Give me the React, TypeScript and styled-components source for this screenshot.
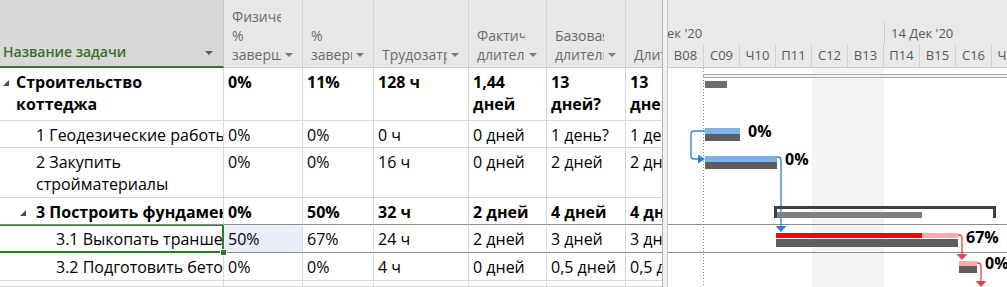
import styled, { createGlobalStyle } from 'styled-components';

const GlobalStyle = createGlobalStyle`
  html, body {
    margin: 0;
    padding: 0;
    background: #fff;
  }
  body {
    font-family: 'Open Sans', 'Noto Sans', sans-serif;
    overflow: hidden;
  }
  * {
    box-sizing: border-box;
  }
`;

type Row = {
  h: number;
  name: string[];
  lead: number;
  toggle?: number;
  bold?: boolean;
  selected?: boolean;
  dark?: boolean;
  cells: string[][];
};

const rows: Row[] = [
  {
    h: 53,
    name: ['Строительство', 'коттеджа'],
    lead: 3,
    toggle: 13,
    bold: true,
    cells: [['0%'], ['11%'], ['128 ч'], ['1,44', 'дней'], ['13', 'дней?'], ['13', 'дней']],
  },
  {
    h: 27,
    name: ['1 Геодезические работы'],
    lead: 36,
    cells: [['0%'], ['0%'], ['0 ч'], ['0 дней'], ['1 день?'], ['1 день?']],
  },
  {
    h: 50,
    name: ['2 Закупить', 'стройматериалы'],
    lead: 36,
    cells: [['0%'], ['0%'], ['16 ч'], ['0 дней'], ['2 дней'], ['2 дней']],
  },
  {
    h: 27,
    name: ['3 Построить фундамент'],
    lead: 20,
    toggle: 16,
    bold: true,
    dark: true,
    cells: [['0%'], ['50%'], ['32 ч'], ['2 дней'], ['4 дней'], ['4 дней']],
  },
  {
    h: 28,
    name: ['3.1 Выкопать траншею'],
    lead: 56,
    selected: true,
    dark: true,
    cells: [['50%'], ['67%'], ['24 ч'], ['2 дней'], ['3 дней'], ['3 дней']],
  },
  {
    h: 28,
    name: ['3.2 Подготовить бетон'],
    lead: 56,
    cells: [['0%'], ['0%'], ['4 ч'], ['0 дней'], ['0,5 дней'], ['0,5 дней']],
  },
];

const headers: string[][] = [
  ['Физический', '%', 'завершения'],
  ['%', 'завершения'],
  ['Трудозатраты'],
  ['Фактическая', 'длительность'],
  ['Базовая', 'длительность'],
  ['Длительность'],
];

const days = ['В08', 'С09', 'Ч10', 'П11', 'С12', 'В13', 'П14', 'В15', 'С16', 'Ч17'];

const GREEN = '#2f7a2c';

const App = () => {
  return (
    <>
      <GlobalStyle />
      <Screen>
        <Sheet>
          <NameHead>
            <span>Название задачи</span>
            <Arrow $green />
          </NameHead>
          {headers.map((lines, i) => (
            <HeadCell key={i} $last={i === headers.length - 1}>
              {lines.map((l, j) => (
                <HeadLine key={j}>
                  <HeadText>{l}</HeadText>
                  {i < headers.length - 1 && <Arrow $hidden={j !== lines.length - 1} />}
                </HeadLine>
              ))}
            </HeadCell>
          ))}

          {rows.map((r, i) => (
            <>
              <NameCell key={'n' + i} $lead={r.lead} $bold={r.bold} $dark={r.dark} $selected={r.selected}>
                {r.toggle && (
                  <ToggleBox $w={r.toggle}>
                    <Toggle />
                  </ToggleBox>
                )}
                <NameText>
                  {r.name.map((l, j) => (
                    <Line key={j}>{l}</Line>
                  ))}
                </NameText>
                {r.selected && <Handle />}
              </NameCell>
              {r.cells.map((c, j) => (
                <Cell
                  key={'c' + i + '-' + j}
                  $bold={r.bold}
                  $dark={r.dark}
                  $tint={r.selected && j === 0}
                  $last={j === r.cells.length - 1}
                >
                  {c.map((l, k) => (
                    <Line key={k}>{l}</Line>
                  ))}
                </Cell>
              ))}
            </>
          ))}
          <NameCell $lead={0} />
          {headers.map((_, j) => (
            <Cell key={'e' + j} $last={j === headers.length - 1} />
          ))}
        </Sheet>

        <Splitter />

        <Timeline>
          <ChartHead>
            <TopTier>
              <WeekCell $w={216} $first>
                ек '20
              </WeekCell>
              <WeekCell $w={252}>14 Дек '20</WeekCell>
            </TopTier>
            <BottomTier>
              {days.map((d) => (
                <DayCell key={d}>{d}</DayCell>
              ))}
            </BottomTier>
          </ChartHead>

          <ChartBody>
            {rows.map((r, i) => (
              <ChartRow key={i} $h={r.h} $dark={r.dark} />
            ))}
            <Gantt viewBox="0 0 339 219" width="339" height="219">
              <line x1="35.5" y1="0" x2="35.5" y2="219" stroke="#8a8a8a" strokeDasharray="1 2" />

              <rect x="35.5" y="6.5" width="320" height="3" fill="#f2f2f2" stroke="#a8a8a8" />
              <rect x="37" y="13" width="22" height="7" fill="#6d6d6d" />

              <rect x="37" y="60" width="35" height="6" fill="#7db1e8" />
              <rect x="37" y="66" width="35" height="7" fill="#5e5e5e" />
              <BarLabel x="80" y="69">0%</BarLabel>

              <rect x="37" y="88" width="72" height="6" fill="#7db1e8" />
              <rect x="37" y="94" width="72" height="7" fill="#5e5e5e" />
              <BarLabel x="117" y="97">0%</BarLabel>

              <path d="M37 63 H26 Q23 63 23 66 V88 Q23 91 26 91 H31" stroke="#2f7fd8" strokeWidth="1.3" fill="none" />
              <polygon points="30,86.5 37,91 30,95.5" fill="#2f7fd8" />
              <path d="M109 89 H110 Q113 89 113 92 V158" stroke="#2f7fd8" strokeWidth="1.3" fill="none" />
              <polygon points="107.5,158 118.5,158 113,164" fill="#2f7fd8" />

              <rect x="106" y="138" width="222" height="3" fill="#404040" />
              <rect x="106" y="138" width="3" height="12" fill="#404040" />
              <rect x="325" y="138" width="3" height="12" fill="#404040" />
              <rect x="109" y="144" width="145" height="6" fill="#7f7f7f" />

              <rect x="108" y="165" width="146" height="5" fill="#ff0000" />
              <rect x="254" y="165" width="36" height="5" fill="#ffabab" />
              <rect x="108" y="171" width="182" height="8" fill="#5e5e5e" />
              <BarLabel x="298" y="175">67%</BarLabel>
              <path d="M290 167 H291 Q294 167 294 170 V187" stroke="#e04848" strokeWidth="1.3" fill="none" />
              <polygon points="288.5,186 299.5,186 294,192" fill="#e04848" />

              <rect x="291" y="193" width="18" height="5" fill="#ffabab" />
              <rect x="291" y="198" width="18" height="7" fill="#5e5e5e" />
              <BarLabel x="317" y="201">0%</BarLabel>
              <path d="M309 195 H310 Q313 195 313 198 V213" stroke="#e04848" strokeWidth="1.3" fill="none" />
              <polygon points="307.5,213 318.5,213 313,219" fill="#e04848" />
            </Gantt>
          </ChartBody>
        </Timeline>
      </Screen>
    </>
  );
};

export default App;

const Screen = styled.div`
  display: flex;
  width: 1007px;
  height: 287px;
  overflow: hidden;
  background: #fff;
`;

const Sheet = styled.div`
  display: grid;
  grid-template-columns: 224px 79px 71px 95px 78px 79px 36px;
  grid-template-rows: 68px 53px 27px 50px 27px 28px 28px 1fr;
  width: 662px;
  height: 287px;
  flex: none;
`;

const NameHead = styled.div`
  display: flex;
  align-items: flex-end;
  justify-content: space-between;
  padding: 0 10px 5px 3px;
  background: #d8d8d8;
  border-right: 1px solid #c8c8c8;
  border-bottom: 2px solid ${GREEN};
  color: #3a6f26;
  font-size: 14px;
  font-weight: 600;
  line-height: 19px;

  span {
    white-space: nowrap;
  }
`;

const HeadCell = styled.div<{ $last?: boolean }>`
  display: flex;
  flex-direction: column;
  justify-content: flex-end;
  padding: 0 ${(p) => (p.$last ? '0' : '9px')} 3px 8px;
  background: #e7e7e7;
  border-right: ${(p) => (p.$last ? 'none' : '1px solid #d3d3d3')};
  border-bottom: 1px solid #c9c9c9;
  color: #6c6c6c;
  font-size: 14px;
  line-height: 19px;
  overflow: hidden;
`;

const HeadLine = styled.div`
  display: flex;
  align-items: center;
  white-space: nowrap;
`;

const HeadText = styled.span`
  flex: 1 1 auto;
  min-width: 0;
  overflow: hidden;
`;

const Arrow = styled.span<{ $green?: boolean; $hidden?: boolean }>`
  flex: none;
  width: 0;
  height: 0;
  margin-left: 4px;
  margin-bottom: ${(p) => (p.$green ? '6px' : '0')};
  border-left: 4px solid transparent;
  border-right: 4px solid transparent;
  border-top: 4px solid ${(p) => (p.$green ? GREEN : '#7a7a7a')};
  visibility: ${(p) => (p.$hidden ? 'hidden' : 'visible')};
`;

const NameCell = styled.div<{ $lead: number; $bold?: boolean; $dark?: boolean; $selected?: boolean }>`
  position: relative;
  z-index: ${(p) => (p.$selected ? 1 : 0)};
  display: flex;
  align-items: flex-start;
  padding: 3px 0 0 ${(p) => p.$lead}px;
  border-right: ${(p) => (p.$selected ? `2px solid ${GREEN}` : '1px solid #d8d8d8')};
  border-bottom: ${(p) => (p.$selected ? `2px solid ${GREEN}` : p.$dark ? '1px solid #8c8c8c' : '1px solid #d8d8d8')};
  box-shadow: ${(p) => (p.$selected ? `inset 0 1px 0 ${GREEN}` : 'none')};
  font-size: 16px;
  font-weight: ${(p) => (p.$bold ? 700 : 400)};
  line-height: 22px;
  color: #000;
  min-width: 0;
`;

const NameText = styled.div`
  flex: 1 1 auto;
  min-width: 0;
  overflow: hidden;
  white-space: nowrap;
`;

const ToggleBox = styled.div<{ $w: number }>`
  flex: none;
  width: ${(p) => p.$w}px;
  padding-top: 9px;
`;

const Toggle = styled.div`
  width: 0;
  height: 0;
  border-style: solid;
  border-width: 0 0 6px 6px;
  border-color: transparent transparent #4d4d4d transparent;
`;

const Handle = styled.div`
  position: absolute;
  right: -5px;
  bottom: -5px;
  width: 7px;
  height: 7px;
  background: ${GREEN};
  border: 1px solid #fff;
`;

const Line = styled.div`
  white-space: nowrap;
`;

const Cell = styled.div<{ $bold?: boolean; $dark?: boolean; $tint?: boolean; $last?: boolean }>`
  padding: 3px 0 0 4px;
  background: ${(p) => (p.$tint ? '#e8eefb' : 'transparent')};
  border-right: ${(p) => (p.$last ? 'none' : '1px solid #d8d8d8')};
  border-bottom: ${(p) => (p.$dark ? '1px solid #8c8c8c' : '1px solid #d8d8d8')};
  font-size: 16px;
  font-weight: ${(p) => (p.$bold ? 700 : 400)};
  line-height: 22px;
  color: #000;
  overflow: hidden;
  min-width: 0;
`;

const Splitter = styled.div`
  flex: none;
  width: 6px;
  height: 287px;
  background: #f1f1f1;
  border-left: 1px solid #b4b4b4;
  border-right: 1px solid #c4c4c4;
`;

const Timeline = styled.div`
  flex: 1;
  display: flex;
  flex-direction: column;
  min-width: 0;
  overflow: hidden;
`;

const ChartHead = styled.div`
  flex: none;
  height: 68px;
  padding-top: 22px;
  background: #e9e9e9;
  border-bottom: 1px solid #c9c9c9;
  color: #5a5a5a;
  font-size: 13px;
  overflow: hidden;
`;

const TopTier = styled.div`
  display: flex;
  height: 22px;
  line-height: 22px;
`;

const WeekCell = styled.div<{ $w: number; $first?: boolean }>`
  flex: none;
  width: ${(p) => p.$w}px;
  padding-left: ${(p) => (p.$first ? '0' : '6px')};
  text-indent: ${(p) => (p.$first ? '-1px' : '0')};
  border-left: ${(p) => (p.$first ? 'none' : '1px solid #cdcdcd')};
  white-space: nowrap;
  overflow: hidden;
`;

const BottomTier = styled.div`
  display: flex;
  height: 23px;
  line-height: 22px;
`;

const DayCell = styled.div`
  flex: none;
  width: 36px;
  text-align: center;
  border-right: 1px solid #d0d0d0;
  white-space: nowrap;
`;

const ChartBody = styled.div`
  position: relative;
  flex: 1;
  background: linear-gradient(
    to right,
    transparent 144px,
    #f4f4f4 144px,
    #f4f4f4 216px,
    transparent 216px
  );
`;

const ChartRow = styled.div<{ $h: number; $dark?: boolean }>`
  height: ${(p) => p.$h}px;
  border-bottom: ${(p) => (p.$dark ? '1px solid #8c8c8c' : 'none')};
`;

const Gantt = styled.svg`
  position: absolute;
  top: 0;
  left: 0;
  overflow: visible;
`;

const BarLabel = styled.text`
  font-family: 'Open Sans', 'Noto Sans', sans-serif;
  font-size: 16px;
  font-weight: 700;
  fill: #000;
`;
